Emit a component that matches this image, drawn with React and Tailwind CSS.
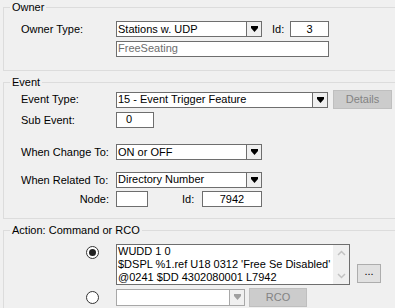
import React from 'react'

const font = { fontFamily: '"Liberation Sans", Arial, sans-serif' }

const Arrow = ({ disabled }) => (
  <svg width="7" height="6" viewBox="0 0 7 6">
    <polygon points="0,0 7,0 7,2 3.5,6 0,2" fill={disabled ? '#a0a0a0' : '#000'} />
  </svg>
)

const Combo = ({ value, w, h = 'h-[16px]', disabled }) => (
  <div className={`${w} ${h} shrink-0 flex border ${disabled ? 'border-[#a8a8a8]' : 'border-[#6e6e6e]'} bg-white`}>
    <div className="flex-1 pl-[1px] leading-[13px] flex items-center whitespace-nowrap overflow-hidden">{value}</div>
    <div className={`w-[15px] flex items-center justify-center border-l ${disabled ? 'border-[#a8a8a8]' : 'border-[#6e6e6e]'} bg-[#f0f0f0]`}>
      <Arrow disabled={disabled} />
    </div>
  </div>
)

const Box = ({ value, w, className = '' }) => (
  <div className={`${w} h-[16px] shrink-0 border border-[#6e6e6e] bg-white flex items-center leading-[13px] ${className}`}>{value}</div>
)

const DisabledButton = ({ label, w, h }) => (
  <div className={`${w} ${h} bg-[#cccccc] border border-[#bfbfbf] text-[#838383] flex items-center justify-center`}>{label}</div>
)

const Label = ({ children }) => (
  <div className="w-[112px] shrink-0 pl-[17px] whitespace-nowrap">{children}</div>
)

const Radio = ({ checked }) => (
  <div className="w-[112px] shrink-0 pl-[82px]">
    <div className="w-[13px] h-[13px] rounded-full border border-[#333] bg-white flex items-center justify-center">
      {checked && <div className="w-[7px] h-[7px] rounded-full bg-[#222]" />}
    </div>
  </div>
)

const Chevron = ({ up }) => (
  <svg width="9" height="6" viewBox="0 0 9 6">
    <polyline points={up ? '1,5 4.5,1.5 8,5' : '1,1 4.5,4.5 8,1'} fill="none" stroke="#c2c2c2" strokeWidth="1.5" />
  </svg>
)

export default function App() {
  return (
    <div className="w-[395px] h-[308px] overflow-hidden bg-[#f0f0f0] text-[11px] text-black" style={font}>
      {/* Owner */}
      <fieldset className="ml-[3px] mt-[1px] w-[420px] border border-[#dcdcdc] pt-[7px] pb-[13px]">
        <legend className="ml-[6px] px-[2px] leading-[13px]">Owner</legend>
        <div className="flex items-center">
          <Label>Owner Type:</Label>
          <Combo value="Stations w. UDP" w="w-[146px]" />
          <div className="ml-[10px] w-[18px]">Id:</div>
          <Box value="3" w="w-[39px]" className="justify-center" />
        </div>
        <div className="flex items-center mt-[3px]">
          <Label />
          <Box value="FreeSeating" w="w-[213px]" className="pl-[1px] text-[#6d6d6d]" />
        </div>
      </fieldset>

      {/* Event */}
      <fieldset className="ml-[3px] mt-[5px] w-[420px] border border-[#dcdcdc] pt-[3px] pb-[10px]">
        <legend className="ml-[6px] px-[2px] leading-[13px]">Event</legend>
        <div className="flex items-center h-[16px]">
          <Label>Event Type:</Label>
          <Combo value="15 - Event Trigger Feature" w="w-[212px]" />
          <div className="ml-[5px]">
            <DisabledButton label="Details" w="w-[59px]" h="h-[19px]" />
          </div>
        </div>
        <div className="flex items-center mt-[4px]">
          <Label>Sub Event:</Label>
          <Box value="0" w="w-[38px]" className="pl-[9px]" />
        </div>
        <div className="flex items-center mt-[16px]">
          <Label>When Change To:</Label>
          <Combo value="ON or OFF" w="w-[146px]" />
        </div>
        <div className="flex items-center mt-[11px]">
          <Label>When Related To:</Label>
          <Combo value="Directory Number" w="w-[146px]" />
        </div>
        <div className="flex items-center mt-[3px]">
          <div className="w-[112px] shrink-0 pr-[7px] text-right">Node:</div>
          <Box value="" w="w-[32px]" />
          <div className="ml-[34px] w-[20px]">Id:</div>
          <Box value="7942" w="w-[60px]" className="justify-center" />
        </div>
      </fieldset>

      {/* Action */}
      <fieldset className="ml-[3px] mt-[5px] w-[420px] h-[100px] border border-[#dcdcdc] pt-[7px]">
        <legend className="ml-[6px] px-[2px] leading-[13px]">Action: Command or RCO</legend>
        <div className="flex items-start">
          <div className="pt-[2px]">
            <Radio checked />
          </div>
          <div className="w-[234px] h-[41px] shrink-0 border border-[#6e6e6e] bg-white flex">
            <div className="flex-1 pl-[1px] leading-[13px] whitespace-nowrap overflow-hidden">
              <div>WUDD 1 0</div>
              <div>$DSPL %1.ref U18 0312 'Free Se Disabled'</div>
              <div>@0241 $DD 4302080001 L7942</div>
            </div>
            <div className="w-[16px] bg-[#f0f0f0] flex flex-col items-center justify-between py-[5px]">
              <Chevron up />
              <Chevron />
            </div>
          </div>
          <div className="ml-[7px] mt-[20px] w-[24px] h-[19px] bg-[#e1e1e1] border border-[#adadad] flex items-center justify-center leading-none pb-[3px]">...</div>
        </div>
        <div className="flex items-center mt-[3px]">
          <Radio />
          <Combo value="" w="w-[129px]" h="h-[17px]" disabled />
          <div className="ml-[4px]">
            <DisabledButton label="RCO" w="w-[58px]" h="h-[19px]" />
          </div>
        </div>
      </fieldset>
    </div>
  )
}
